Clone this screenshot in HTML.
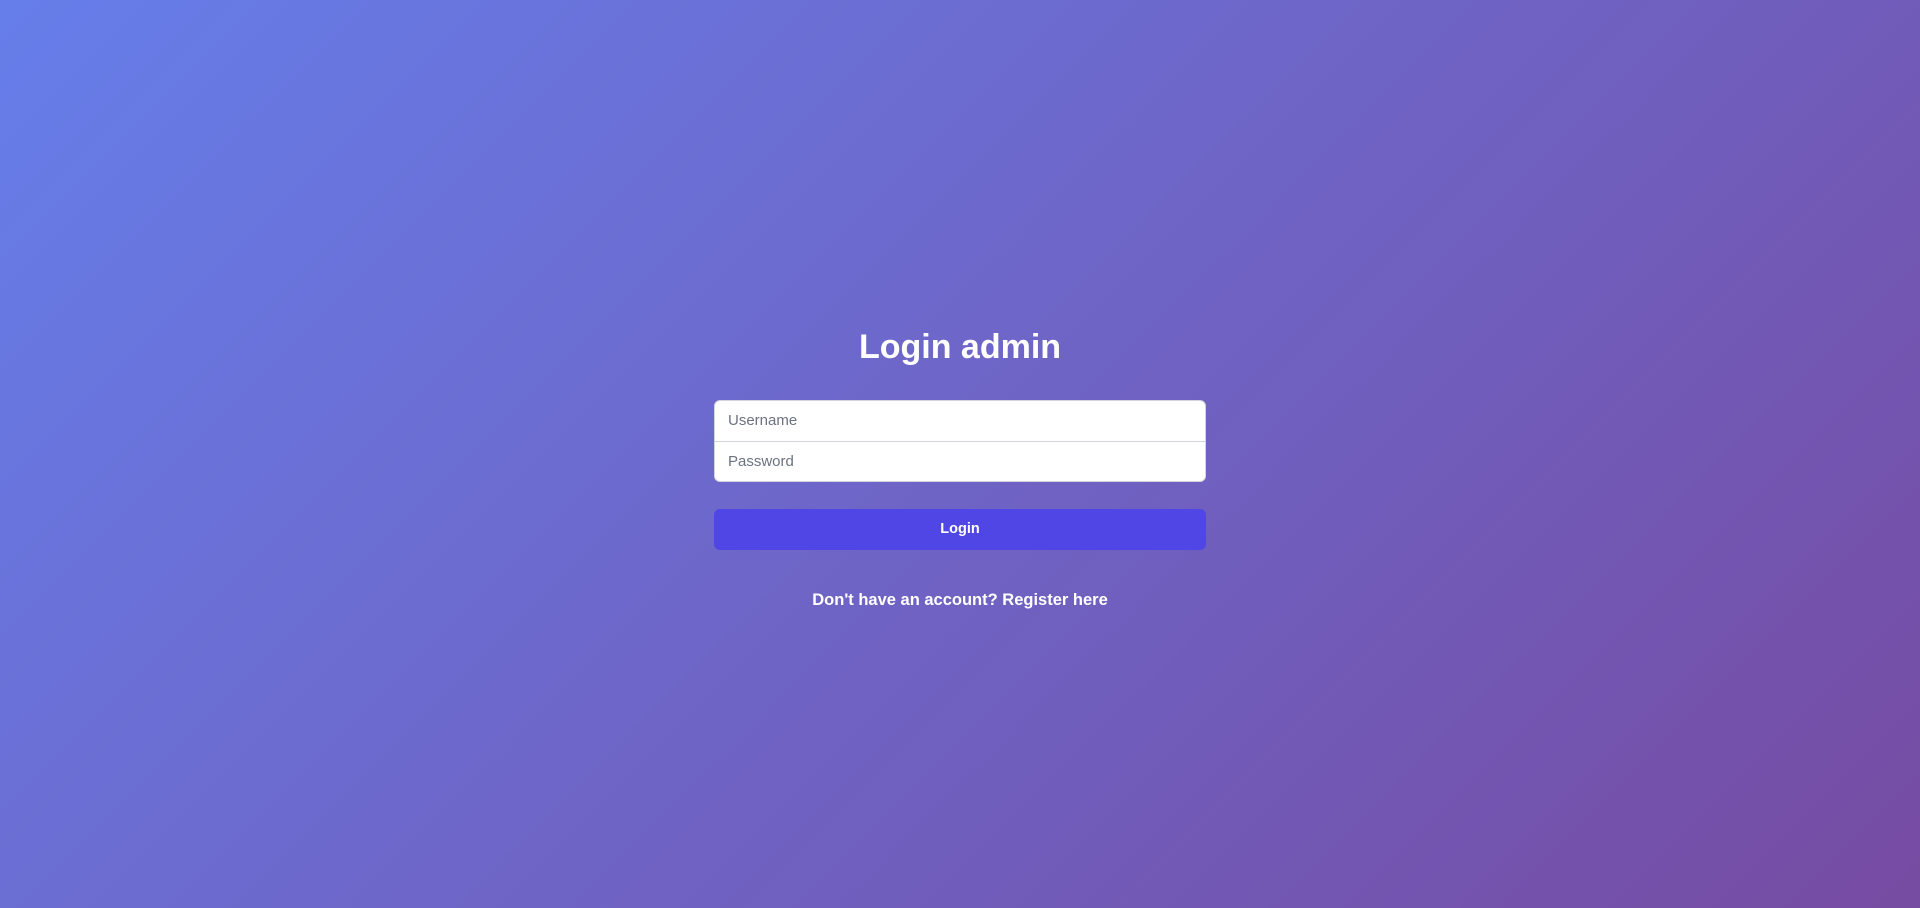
<!DOCTYPE html>
<html><head><style>
html,body{margin:0;height:908px;overflow:hidden}
body{background:linear-gradient(135deg,#667eea 0%,#764ba2 100%);font-family:"Liberation Sans",sans-serif;position:relative;width:1920px}
h1{position:absolute;top:323px;left:0;width:1920px;text-align:center;margin:0;font-size:34px;line-height:48px;color:#fff;font-weight:bold}
.form{position:absolute;left:714px;top:400px;width:492px;height:82px;background:#fff;border-radius:6px;box-sizing:border-box;border:1px solid #d1d5db;overflow:hidden}
.f{height:40px;line-height:40px;padding-left:13px;font-size:15px;color:#6b7280;box-sizing:border-box}
.f+.f{border-top:1px solid #d1d5db}
.btn{position:absolute;left:714px;top:509px;width:492px;height:41px;background:#4f46e5;border-radius:6px;color:#fff;font-weight:bold;font-size:14.5px;text-align:center;line-height:41px}
.link{position:absolute;top:588px;left:0;width:1920px;text-align:center;color:#fff;font-weight:bold;font-size:16.5px;line-height:24px}
</style></head><body>
<h1>Login admin</h1>
<div class="form"><div class="f">Username</div><div class="f">Password</div></div>
<div class="btn">Login</div>
<div class="link">Don't have an account? Register here</div>
</body></html>
